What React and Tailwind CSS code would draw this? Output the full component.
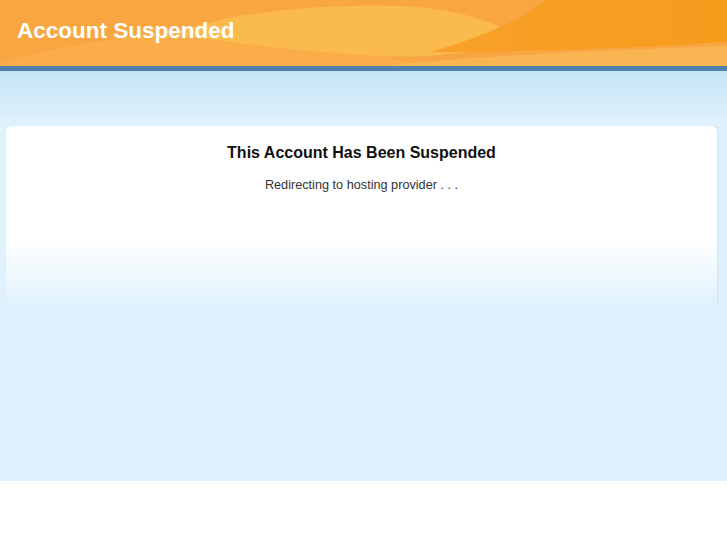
import React from 'react';

function HeaderWaves() {
  return (
    <svg
      className="absolute inset-0 h-full w-full"
      viewBox="0 0 727 66"
      preserveAspectRatio="none"
    >
      <defs>
        <linearGradient id="darkOrange" x1="0" y1="0" x2="1" y2="0">
          <stop offset="0" stopColor="#f8a22e" />
          <stop offset="0.4" stopColor="#f79e22" />
          <stop offset="1" stopColor="#f79c1d" />
        </linearGradient>
      </defs>
      <rect width="727" height="66" fill="#f9a642" />
      {/* soft lighter lower left */}
      <path d="M0 66 L0 62 C70 44 160 30 240 26 C300 30 360 50 420 66 Z" fill="#faad48" />
      {/* light hill */}
      <path
        d="M170 34 C240 10 320 4 400 6 C450 8 490 20 515 34 C480 54 430 58 380 56 C310 52 240 44 170 34 Z"
        fill="#fbba4c"
      />
      {/* dark orange top right */}
      <path
        d="M545 0 C525 18 480 38 430 52 C530 52 640 48 727 42 L727 0 Z"
        fill="url(#darkOrange)"
      />
      {/* lower light band */}
      <path d="M380 66 C450 58 560 52 727 46 L727 66 Z" fill="#fab553" />
    </svg>
  );
}

export default function App() {
  return (
    <div className="w-full min-h-screen bg-white" style={{ fontFamily: '"Liberation Sans", Arial, sans-serif' }}>
      {/* header */}
      <div className="relative h-[66px] overflow-hidden">
        <HeaderWaves />
        <h1 className="relative pl-[17px] pt-[18px] text-[22.5px] font-bold leading-[26px] text-white">
          Account Suspended
        </h1>
      </div>
      <div className="h-[5px] bg-[#4f80aa]" />

      {/* body */}
      <div className="h-[410px] bg-gradient-to-b from-[#c3e4f5] to-[#dff1fc] to-[50px] pt-[55px] pl-[6px] pr-[10px]">
        <div className="h-[180px] rounded-t-[6px] bg-gradient-to-b from-white from-[64%] to-[#dff1fc] pt-[17px] text-center shadow-[1px_0_2px_rgba(120,170,210,0.2)]">
          <h2 className="text-[16px] font-bold leading-[20px] text-[#111]">
            This Account Has Been Suspended
          </h2>
          <p className="mt-[14px] text-[12.7px] leading-[16px] text-[#333]">
            Redirecting to hosting provider . . .
          </p>
        </div>
      </div>
    </div>
  );
}
